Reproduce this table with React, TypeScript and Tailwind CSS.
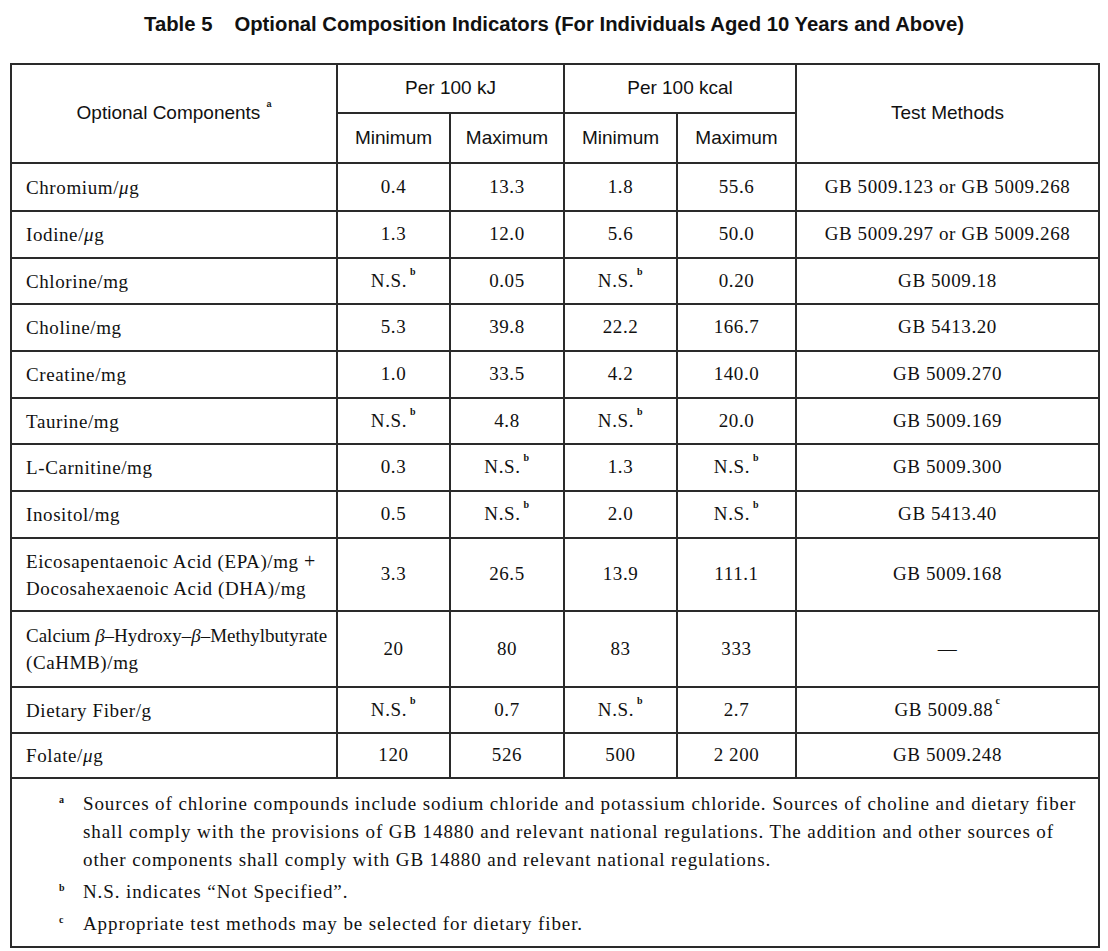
import React from "react";

const serif = { fontFamily: '"Liberation Serif", "Times New Roman", "Noto Sans CJK SC", serif' };

type Row = { name: React.ReactNode; v: React.ReactNode[]; m: React.ReactNode; h: string };

const NS = (
  <span>
    N.S.<sup className="text-[10px] font-bold align-[7px] ml-[3px]">b</sup>
  </span>
);

const mu = <i>μ</i>;

const rows: Row[] = [
  { name: <>Chromium/{mu}g</>, v: ["0.4", "13.3", "1.8", "55.6"], m: "GB 5009.123 or GB 5009.268", h: "h-[48px]" },
  { name: <>Iodine/{mu}g</>, v: ["1.3", "12.0", "5.6", "50.0"], m: "GB 5009.297 or GB 5009.268", h: "h-[47px]" },
  { name: "Chlorine/mg", v: [NS, "0.05", NS, "0.20"], m: "GB 5009.18", h: "h-[46px]" },
  { name: "Choline/mg", v: ["5.3", "39.8", "22.2", "166.7"], m: "GB 5413.20", h: "h-[47px]" },
  { name: "Creatine/mg", v: ["1.0", "33.5", "4.2", "140.0"], m: "GB 5009.270", h: "h-[47px]" },
  { name: "Taurine/mg", v: [NS, "4.8", NS, "20.0"], m: "GB 5009.169", h: "h-[46px]" },
  { name: "L-Carnitine/mg", v: ["0.3", NS, "1.3", NS], m: "GB 5009.300", h: "h-[47px]" },
  { name: "Inositol/mg", v: ["0.5", NS, "2.0", NS], m: "GB 5413.40", h: "h-[47px]" },
  {
    name: (
      <>
        Eicosapentaenoic Acid (EPA)/mg <span className="text-[20px]">+</span>
        <br />
        Docosahexaenoic Acid (DHA)/mg
      </>
    ),
    v: ["3.3", "26.5", "13.9", "111.1"],
    m: "GB 5009.168",
    h: "h-[73px]",
  },
  {
    name: (
      <>
        <span className="tracking-[0px]">
          Calcium <i>β</i>–Hydroxy–<i>β</i>–Methylbutyrate
        </span>
        <br />
        (CaHMB)/mg
      </>
    ),
    v: ["20", "80", "83", "333"],
    m: "—",
    h: "h-[76px]",
  },
  {
    name: "Dietary Fiber/g",
    v: [NS, "0.7", NS, "2.7"],
    m: (
      <span>
        GB 5009.88<sup className="text-[10px] font-bold align-[7px] ml-[2px]">c</sup>
      </span>
    ),
    h: "h-[46px]",
  },
  { name: <>Folate/{mu}g</>, v: ["120", "526", "500", "2 200"], m: "GB 5009.248", h: "h-[45px]" },
];

const bd = "border-2 border-[#2a2a2a]";

export default function App() {
  return (
    <div className="w-[1108px] h-[951px] bg-white text-[#111]" style={{ fontFamily: '"Liberation Sans", Arial, sans-serif' }}>
      <div className="h-[63px] pt-[12px] text-center font-bold text-[20.3px] leading-[24px]">
        Table 5<span className="ml-[22px]">Optional Composition Indicators (For Individuals Aged 10 Years and Above)</span>
      </div>
      <table className="ml-[10px] w-[1088px] table-fixed border-collapse">
        <colgroup>
          <col className="w-[326px]" />
          <col className="w-[113px]" />
          <col className="w-[114px]" />
          <col className="w-[113px]" />
          <col className="w-[119px]" />
          <col className="w-[303px]" />
        </colgroup>
        <thead className="text-[19px]">
          <tr className="h-[49px]">
            <td rowSpan={2} className={`${bd} text-center align-middle`}>
              Optional Components<sup className="text-[9px] font-bold align-[8px] ml-[6px]">a</sup>
            </td>
            <td colSpan={2} className={`${bd} text-center`}>Per 100 kJ</td>
            <td colSpan={2} className={`${bd} text-center`}>Per 100 kcal</td>
            <td rowSpan={2} className={`${bd} text-center`}>Test Methods</td>
          </tr>
          <tr className="h-[50px]">
            <td className={`${bd} text-center`}>Minimum</td>
            <td className={`${bd} text-center`}>Maximum</td>
            <td className={`${bd} text-center`}>Minimum</td>
            <td className={`${bd} text-center`}>Maximum</td>
          </tr>
        </thead>
        <tbody className="text-[19px] tracking-[0.6px]" style={serif}>
          {rows.map((r, i) => (
            <tr key={i} className={r.h}>
              <td className={`${bd} pl-[14px] leading-[27px] whitespace-nowrap`}>{r.name}</td>
              {r.v.map((v, j) => (
                <td key={j} className={`${bd} text-center whitespace-nowrap`}>{v}</td>
              ))}
              <td className={`${bd} text-center whitespace-nowrap`}>{r.m}</td>
            </tr>
          ))}
          <tr>
            <td colSpan={6} className={`${bd} pl-[47px] pt-[11px] pb-[8px] text-[19px] tracking-[0.9px] leading-[28px] whitespace-nowrap`}>
              <div className="flex">
                <span className="w-[24px] shrink-0 text-[10px] font-bold leading-[20px]">a</span>
                <div>
                  Sources of chlorine compounds include sodium chloride and potassium chloride. Sources of choline and dietary fiber
                  <br />
                  shall comply with the provisions of GB 14880 and relevant national regulations. The addition and other sources of
                  <br />
                  other components shall comply with GB 14880 and relevant national regulations.
                </div>
              </div>
              <div className="flex mt-[4px]">
                <span className="w-[24px] shrink-0 text-[10px] font-bold leading-[20px]">b</span>
                <div>N.S. indicates “Not Specified”.</div>
              </div>
              <div className="flex mt-[4px]">
                <span className="w-[24px] shrink-0 text-[10px] font-bold leading-[20px]">c</span>
                <div>Appropriate test methods may be selected for dietary fiber.</div>
              </div>
            </td>
          </tr>
        </tbody>
      </table>
    </div>
  );
}
